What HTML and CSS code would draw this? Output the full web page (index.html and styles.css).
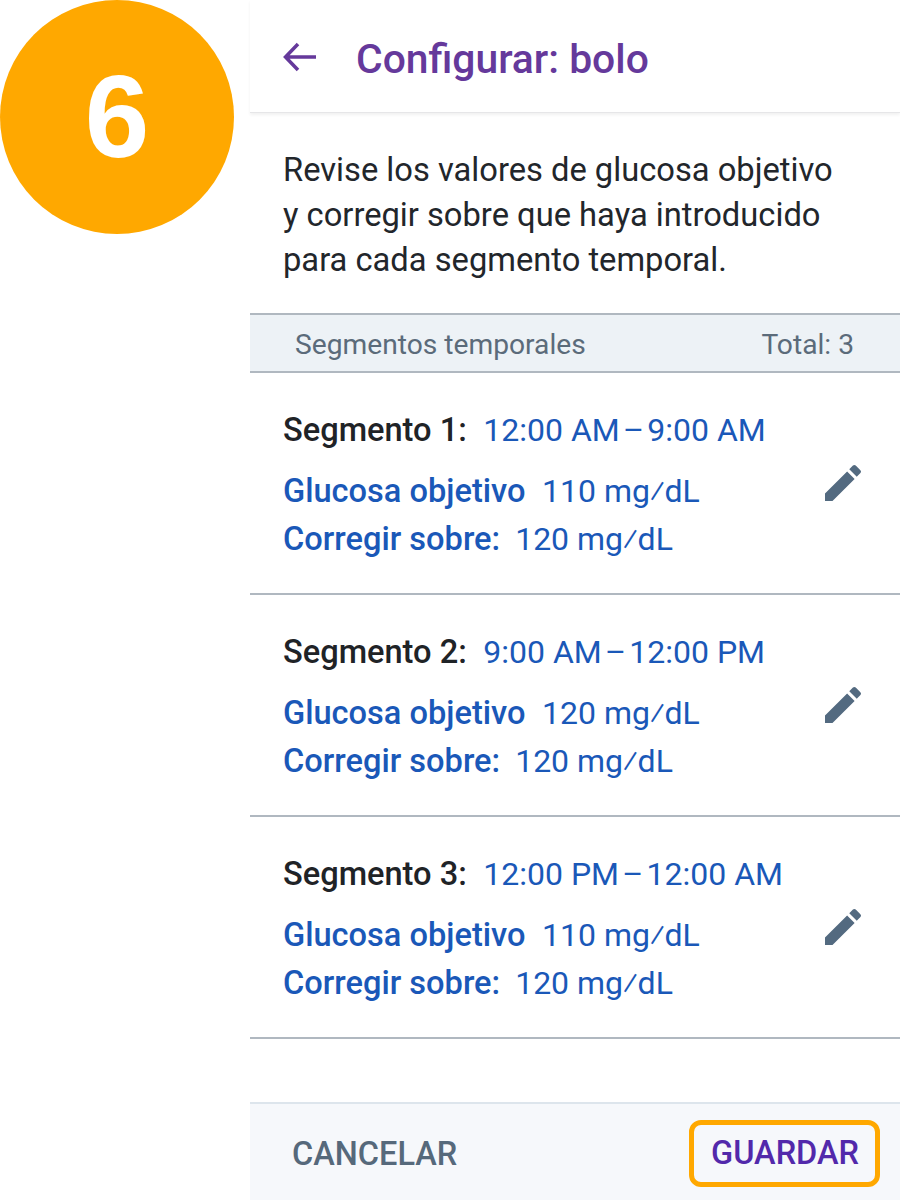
FILE: index.html
```html
<!DOCTYPE html>
<html>
  <head>
    <title>Configurar: bolo</title>
    <link rel="stylesheet" href="styles.css">
  </head>
  <body>
    <div class="page">
      <!-- paso -->
      <div class="step-col">
        <div class="step">6</div>
      </div>

      <!-- pantalla -->
      <div class="screen">
        <div class="header">
          <svg class="back" viewBox="0 0 34 30"><path d="M33 15H3M15 2L2.500 15 15 28"/></svg>
          <h1>Configurar: bolo</h1>
        </div>

        <p class="intro">Revise los valores de glucosa objetivo y corregir sobre que haya introducido para cada segmento temporal.</p>

        <div class="list-head">
          <span>Segmentos temporales</span>
          <span>Total: 3</span>
        </div>

        <div class="segment">
          <div class="segment-info">
            <div class="segment-title"><b>Segmento 1:</b><span>12:00 AM&#8202;–&#8202;9:00 AM</span></div>
            <div class="value value-first"><b>Glucosa objetivo</b><span>110 mg⁄dL</span></div>
            <div class="value value-second"><b>Corregir sobre:</b><span>120 mg⁄dL</span></div>
          </div>
          <svg class="edit" viewBox="0 0 24 24"><path d="M3 17.250V21h3.750L17.810 9.940l-3.750-3.750L3 17.250zM20.710 7.040a1 1 0 0 0 0-1.410l-2.340-2.340a1 1 0 0 0-1.410 0l-1.830 1.830 3.750 3.750 1.830-1.830z"/></svg>
        </div>

        <div class="segment">
          <div class="segment-info">
            <div class="segment-title"><b>Segmento 2:</b><span>9:00 AM&#8202;–&#8202;12:00 PM</span></div>
            <div class="value value-first"><b>Glucosa objetivo</b><span>120 mg⁄dL</span></div>
            <div class="value value-second"><b>Corregir sobre:</b><span>120 mg⁄dL</span></div>
          </div>
          <svg class="edit" viewBox="0 0 24 24"><path d="M3 17.250V21h3.750L17.810 9.940l-3.750-3.750L3 17.250zM20.710 7.040a1 1 0 0 0 0-1.410l-2.340-2.340a1 1 0 0 0-1.410 0l-1.830 1.830 3.750 3.750 1.830-1.830z"/></svg>
        </div>

        <div class="segment">
          <div class="segment-info">
            <div class="segment-title"><b>Segmento 3:</b><span>12:00 PM&#8202;–&#8202;12:00 AM</span></div>
            <div class="value value-first"><b>Glucosa objetivo</b><span>110 mg⁄dL</span></div>
            <div class="value value-second"><b>Corregir sobre:</b><span>120 mg⁄dL</span></div>
          </div>
          <svg class="edit" viewBox="0 0 24 24"><path d="M3 17.250V21h3.750L17.810 9.940l-3.750-3.750L3 17.250zM20.710 7.040a1 1 0 0 0 0-1.410l-2.340-2.340a1 1 0 0 0-1.410 0l-1.830 1.830 3.750 3.750 1.830-1.830z"/></svg>
        </div>

        <div class="footer">
          <span class="btn-cancel">CANCELAR</span>
          <span class="btn-save">GUARDAR</span>
        </div>
      </div>
    </div>
  </body>
</html>
```

FILE: styles.css
```css
html, body {
  margin: 0;
  padding: 0;
  background-color: white;
}

.page {
  display: flex;
  width: 900px;
  height: 1200px;
  overflow: hidden;
  font-family: Roboto, "Liberation Sans", sans-serif;
}

.step-col {
  width: 250px;
  flex: none;
}

.step {
  width: 234px;
  height: 234px;
  border-radius: 50%;
  background-color: #ffa800;
  color: white;
  font-family: "Liberation Sans", sans-serif;
  font-weight: bold;
  font-size: 116px;
  display: flex;
  align-items: center;
  justify-content: center;
}

.screen {
  flex: 1;
  display: flex;
  flex-direction: column;
}

.header {
  height: 113px;
  display: flex;
  align-items: center;
  padding-left: 33px;
  box-sizing: border-box;
  border-bottom: 1px solid #e6e6e8;
  box-shadow: 0 2px 3px rgba(0, 0, 0, 0.06);
}

.back {
  width: 34px;
  height: 30px;
  margin-right: 39px;
  margin-top: 1px;
  overflow: visible;
  fill: none;
  stroke: #65399b;
  stroke-width: 3.500;
}

.header h1 {
  margin: 0;
  font-size: 40.800px;
  font-weight: 500;
  color: #65399b;
  padding-top: 6px;
}

.intro {
  margin: 0;
  padding: 35px 50px 0 33px;
  height: 200px;
  box-sizing: border-box;
  font-size: 32.700px;
  line-height: 45px;
  color: #22262b;
}

.list-head {
  height: 60px;
  box-sizing: border-box;
  display: flex;
  justify-content: space-between;
  align-items: center;
  padding: 3px 46px 0 45px;
  background-color: #edf2f6;
  border-top: 2px solid #b0b8c0;
  border-bottom: 2px solid #b0b8c0;
  font-size: 28.200px;
  color: #5b6b7a;
}

.segment {
  height: 222px;
  box-sizing: border-box;
  display: flex;
  justify-content: space-between;
  align-items: center;
  padding: 0 37px 0 33px;
  border-bottom: 2px solid #b0b8c0;
}

.segment-info {
  padding-top: 3px;
  font-size: 32px;
  line-height: 36px;
  color: #1a58b8;
}

.segment-info b {
  font-size: 32.600px;
  font-weight: 500;
}

.segment-title b {
  color: #1f2327;
  margin-right: 16.500px;
}

.value {
  margin-top: 12px;
}

.value-first {
  margin-top: 25px;
}

.value b {
  margin-right: 16.500px;
}

.value-second b {
  margin-right: 15px;
}

.edit {
  width: 48px;
  height: 48px;
  fill: #536a80;
  margin-right: -4px;
}

.footer {
  margin-top: 63px;
  flex: 1;
  display: flex;
  justify-content: space-between;
  align-items: center;
  padding: 2px 20px 0 42px;
  background-color: #f6f8fb;
  border-top: 2px solid #dde5ec;
  font-size: 32.500px;
  line-height: 40px;
  font-weight: 500;
}

.btn-cancel {
  color: #56697b;
  padding-top: 2px;
}

.btn-save {
  color: #5229ab;
  padding: 8px 16px 9px 17px;
  border: 5px solid #ffa800;
  border-radius: 12px;
}
```
